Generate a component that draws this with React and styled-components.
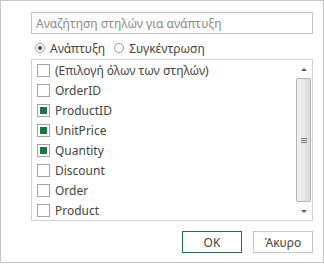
import React, { useState } from "react";
import styled, { createGlobalStyle } from "styled-components";

const GlobalStyle = createGlobalStyle`
  html, body {
    margin: 0;
    padding: 0;
    background: #ffffff;
  }
  * {
    box-sizing: border-box;
  }
`;

const Dialog = styled.div`
  width: 324px;
  height: 263px;
  border: 1px solid #c6c6c6;
  background: #ffffff;
  padding: 11px 10px 0 30px;
  font-family: "Segoe UI", "Noto Sans", sans-serif;
  font-size: 12px;
  color: #444444;
  display: flex;
  flex-direction: column;
`;

const SearchInput = styled.input`
  width: 282px;
  height: 22px;
  border: 1px solid #c6c6c6;
  padding: 0 4px;
  font-family: inherit;
  font-size: 12px;
  color: #444444;
  outline: none;
  &::placeholder {
    color: #8a8a8a;
  }
`;

const RadioRow = styled.div`
  height: 25px;
  display: flex;
  align-items: center;
  padding: 3px 0 0 4px;
  gap: 9px;
`;

const RadioLabel = styled.label`
  display: flex;
  align-items: center;
  gap: 5px;
  cursor: pointer;
`;

const RadioCircle = styled.span`
  width: 10px;
  height: 10px;
  border-radius: 50%;
  border: 1px solid #9a9a9a;
  display: flex;
  align-items: center;
  justify-content: center;
  &::after {
    content: "";
    width: 4px;
    height: 4px;
    border-radius: 50%;
    background: ${(p) => (p.$on ? "#444444" : "transparent")};
  }
`;

const ListBox = styled.div`
  width: 282px;
  height: 162px;
  border: 1px solid #d4d4d4;
  display: flex;
`;

const Items = styled.div`
  flex: 1;
  display: flex;
  flex-direction: column;
`;

const Row = styled.div`
  height: 20px;
  display: flex;
  align-items: center;
  padding-left: 5px;
  gap: 5px;
  cursor: pointer;
`;

const Box = styled.span`
  width: 13px;
  height: 13px;
  border: 1px solid #a5a5a5;
  background: #ffffff;
  display: flex;
  align-items: center;
  justify-content: center;
  &::after {
    content: "";
    width: 7px;
    height: 7px;
    background: ${(p) => (p.$on ? "#217346" : "transparent")};
  }
`;

const ScrollBar = styled.div`
  width: 17px;
  display: flex;
  flex-direction: column;
  align-items: center;
  background: #ffffff;
  padding: 0 1px;
`;

const Arrow = styled.div`
  height: 18px;
  width: 100%;
  display: flex;
  align-items: center;
  justify-content: center;
  &::after {
    content: "";
    border-left: 3px solid transparent;
    border-right: 3px solid transparent;
    ${(p) =>
      p.$up
        ? "border-bottom: 3px solid #606060;"
        : "border-top: 3px solid #606060;"}
  }
`;

const Thumb = styled.div`
  flex: 1;
  width: 15px;
  border: 1px solid #b4b4b4;
  border-radius: 2px;
  background: linear-gradient(to right, #f2f2f2, #e6e6e6 60%, #d8d8d8);
  display: flex;
  flex-direction: column;
  align-items: center;
  justify-content: center;
  gap: 1px;
`;

const Grip = styled.span`
  width: 6px;
  height: 1px;
  background: #777777;
`;

const Footer = styled.div`
  display: flex;
  justify-content: flex-end;
  gap: 11px;
  margin-top: 10px;
`;

const Button = styled.button`
  width: 60px;
  height: 22px;
  background: #ffffff;
  border: 1px solid ${(p) => (p.$primary ? "#217346" : "#c6c6c6")};
  font-family: inherit;
  font-size: 12px;
  color: #444444;
  padding: 0;
  cursor: pointer;
`;

const columns = [
  { name: "(Επιλογή όλων των στηλών)", on: false },
  { name: "OrderID", on: false },
  { name: "ProductID", on: true },
  { name: "UnitPrice", on: true },
  { name: "Quantity", on: true },
  { name: "Discount", on: false },
  { name: "Order", on: false },
  { name: "Product", on: false },
];

export default function App() {
  const [mode, setMode] = useState("expand");
  const [items, setItems] = useState(columns);

  const toggle = (i) =>
    setItems(items.map((c, j) => (j === i ? { ...c, on: !c.on } : c)));

  return (
    <>
      <GlobalStyle />
      <Dialog>
        <SearchInput placeholder="Αναζήτηση στηλών για ανάπτυξη" />
        <RadioRow>
          <RadioLabel onClick={() => setMode("expand")}>
            <RadioCircle $on={mode === "expand"} />
            Ανάπτυξη
          </RadioLabel>
          <RadioLabel onClick={() => setMode("aggregate")}>
            <RadioCircle $on={mode === "aggregate"} />
            Συγκέντρωση
          </RadioLabel>
        </RadioRow>
        <ListBox>
          <Items>
            {items.map((c, i) => (
              <Row key={c.name} onClick={() => toggle(i)}>
                <Box $on={c.on} />
                {c.name}
              </Row>
            ))}
          </Items>
          <ScrollBar>
            <Arrow $up />
            <Thumb>
              <Grip />
              <Grip />
              <Grip />
            </Thumb>
            <Arrow />
          </ScrollBar>
        </ListBox>
        <Footer>
          <Button $primary>OK</Button>
          <Button>Άκυρο</Button>
        </Footer>
      </Dialog>
    </>
  );
}
